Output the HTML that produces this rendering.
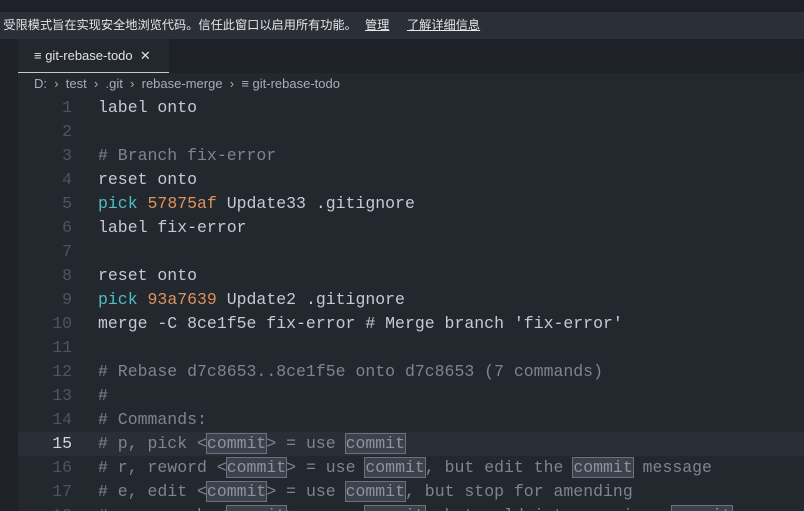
<html style="overflow:hidden;height:511px"><head><style>
body{margin:0;width:804px;height:511px;overflow:hidden;background:#23272e;font-family:"Liberation Sans","Noto Sans CJK SC",sans-serif;position:relative}
.top{position:absolute;left:0;top:0;width:804px;height:12px;background:#1e2127}
.ban{position:absolute;left:0;top:12px;width:804px;height:27px;background:#2b2f37;color:#e6e6e6;font-size:12.2px;line-height:27px;white-space:nowrap}
.ban u{position:absolute;top:0}
.act{position:absolute;left:0;top:39px;width:18px;height:472px;background:#1e2127}
.tabs{position:absolute;left:18px;top:39px;width:786px;height:34px;background:#1e2127}
.tab{position:absolute;left:0;top:0;width:151px;height:34px;background:#23272e;border-bottom:1px solid #c8c8c8;box-sizing:border-box;color:#e0e0e0;font-size:13px;line-height:34px;padding-left:16px}
.bc{position:absolute;left:34px;top:76px;color:#a9adb5;font-size:13px}
.code{position:absolute;left:18px;top:96px;height:415px;overflow:hidden;font-family:"Liberation Mono",monospace;font-size:16.5px;color:#c5cad3}
.l{height:24px;line-height:24px;white-space:pre;position:relative}
.n{display:inline-block;width:54px;text-align:right;color:#4e5561;margin-right:26px}
.c{color:#7d8591}.k{color:#4fbcc7}.h{color:#e0925c}
.b{background:#3c414b;outline:1px solid #6c727d;color:#8d939d}
.cur{background:#2a2e36}
</style></head><body>
<div class="top"></div>
<div class="ban">&nbsp;受限模式旨在实现安全地浏览代码。信任此窗口以启用所有功能。<u style="left:365px">管理</u><u style="left:407px">了解详细信息</u></div>
<div class="act"></div>
<div class="tabs"><div class="tab">≡ git-rebase-todo &nbsp;✕</div></div>
<div class="bc">D: &nbsp;›&nbsp; test &nbsp;›&nbsp; .git &nbsp;›&nbsp; rebase-merge &nbsp;›&nbsp; ≡ git-rebase-todo</div>
<div class="code">
<div class="l"><span class="n">1</span>label onto</div>
<div class="l"><span class="n">2</span></div>
<div class="l"><span class="n">3</span><span class="c"># Branch fix-error</span></div>
<div class="l"><span class="n">4</span>reset onto</div>
<div class="l"><span class="n">5</span><span class="k">pick</span> <span class="h">57875af</span> Update33 .gitignore</div>
<div class="l"><span class="n">6</span>label fix-error</div>
<div class="l"><span class="n">7</span></div>
<div class="l"><span class="n">8</span>reset onto</div>
<div class="l"><span class="n">9</span><span class="k">pick</span> <span class="h">93a7639</span> Update2 .gitignore</div>
<div class="l"><span class="n">10</span>merge -C 8ce1f5e fix-error # Merge branch 'fix-error'</div>
<div class="l"><span class="n">11</span></div>
<div class="l"><span class="n">12</span><span class="c"># Rebase d7c8653..8ce1f5e onto d7c8653 (7 commands)</span></div>
<div class="l"><span class="n">13</span><span class="c">#</span></div>
<div class="l"><span class="n">14</span><span class="c"># Commands:</span></div>
<div class="l cur" style="width:786px"><span class="n" style="color:#d0d4da">15</span><span class="c"># p, pick &lt;<span class="b">commit</span>&gt; = use <span class="b">commit</span></span></div>
<div class="l"><span class="n">16</span><span class="c"># r, reword &lt;<span class="b">commit</span>&gt; = use <span class="b">commit</span>, but edit the <span class="b">commit</span> message</span></div>
<div class="l"><span class="n">17</span><span class="c"># e, edit &lt;<span class="b">commit</span>&gt; = use <span class="b">commit</span>, but stop for amending</span></div>
<div class="l"><span class="n">18</span><span class="c"># s, squash &lt;<span class="b">commit</span>&gt; = use <span class="b">commit</span>, but meld into previous <span class="b">commit</span></span></div>
</div>
</body></html>
